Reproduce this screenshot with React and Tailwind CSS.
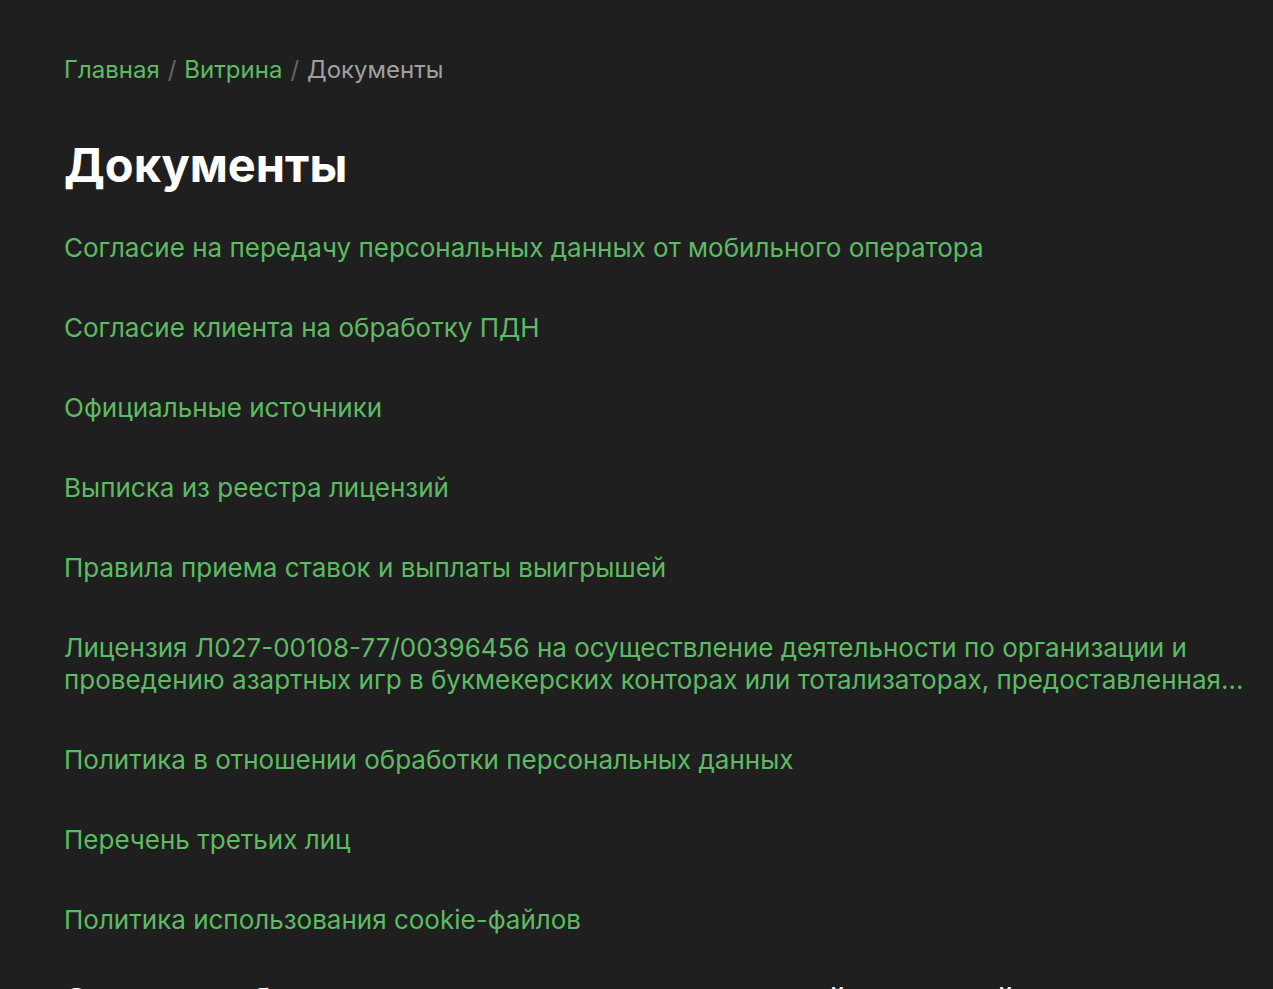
import React from 'react';

const docs = [
    'Согласие на передачу персональных данных от мобильного оператора',
    'Согласие клиента на обработку ПДН',
    'Официальные источники',
    'Выписка из реестра лицензий',
    'Правила приема ставок и выплаты выигрышей',
    'Лицензия Л027-00108-77/00396456 на осуществление деятельности по организации и проведению азартных игр в букмекерских конторах или тотализаторах, предоставленная ФНС России',
    'Политика в отношении обработки персональных данных',
    'Перечень третьих лиц',
    'Политика использования cookie-файлов',
];

export default function App() {
    return (
        <div className="bg-[#1f1f1f] font-['Inter',sans-serif] overflow-hidden h-[989px]">
            <div className="pl-16 pr-7 pt-[54px]">
                {/* Breadcrumbs */}
                <nav className="flex items-center gap-2 text-[24px] leading-8">
                    <a href="#" className="text-[#5dbb63]">Главная</a>
                    <span className="text-[#666]">/</span>
                    <a href="#" className="text-[#5dbb63]">Витрина</a>
                    <span className="text-[#666]">/</span>
                    <span className="text-[#a0a0a0]">Документы</span>
                </nav>

                <h1 className="mt-[51px] text-[47px] leading-[56px] font-bold text-white">Документы</h1>

                <ul className="mt-[39px] flex flex-col gap-12">
                    {docs.map(d => (
                        <li key={d}>
                            <a href="#" className="text-[#5dbb63] text-[26px] leading-8 line-clamp-2">{d}</a>
                        </li>
                    ))}
                </ul>

                <p className="mt-[45px] text-white font-bold text-[32px] leading-10">
                    Сведения об организаторе азартных игр и о действующей лицензии на осуществление деятельности
                </p>
            </div>
        </div>
    );
}
